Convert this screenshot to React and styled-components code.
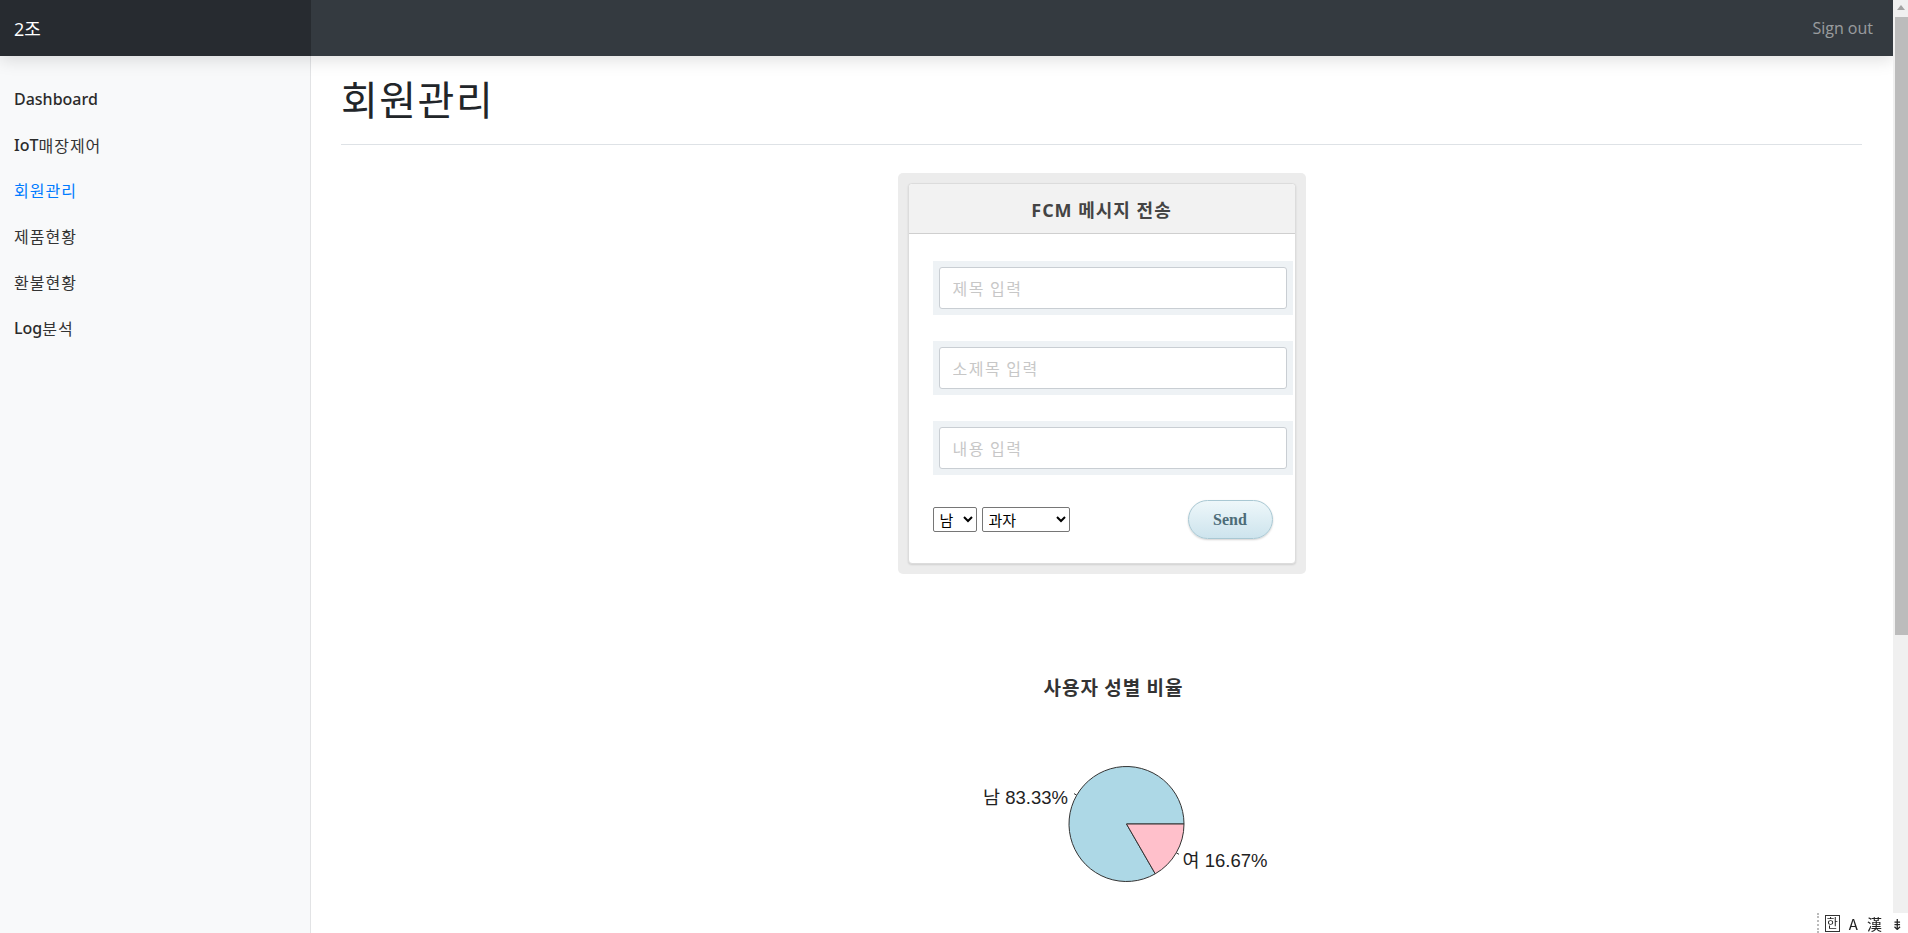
import React from 'react';
import styled, { createGlobalStyle } from 'styled-components';

const GlobalStyle = createGlobalStyle`
    html, body {
        margin: 0;
        padding: 0;
    }
    body {
        padding-right: 15px; // room for the window scrollbar drawn below
        font-family: "Open Sans", "Noto Sans CJK KR", sans-serif;
        color: #212529;
        background: #fff;
    }
    * {
        box-sizing: border-box;
    }
`;

const Navbar = styled.header`
    display: flex;
    align-items: center;
    height: 56px;
    background: #343a40;
    box-shadow: 0 4px 16px rgba(0, 0, 0, 0.13);
    position: relative;
    z-index: 2;
`;

const Brand = styled.div`
    display: flex;
    align-items: center;
    width: 311px;
    height: 100%;
    padding-left: 14px;
    background: rgba(0, 0, 0, 0.25);
    color: #fff;
    font-size: 18px;
`;

const SignOut = styled.a`
    margin-left: auto;
    padding-right: 20px;
    color: rgba(255, 255, 255, 0.5);
    font-size: 16px;
    text-decoration: none;
`;

const Body = styled.div`
    display: flex;
`;

const Sidebar = styled.nav`
    width: 311px;
    flex-shrink: 0;
    padding-top: 20px;
    background: #f8f9fa;
    border-right: 1px solid #e2e3e5;
    min-height: 1304px;
`;

const NavItem = styled.a`
    display: flex;
    align-items: center;
    height: 45.8px;
    padding-left: 14px;
    font-size: 16px;
    font-weight: 400;
    letter-spacing: 1px;
    color: ${props => (props.active ? '#007bff' : '#333')};
    text-decoration: none;
`;

const Latin = styled.span`
    font-family: "Noto Sans", sans-serif;
    font-weight: 500;
    letter-spacing: 0;
    color: ${props => (props.active ? '#007bff' : '#2b2b2b')};
`;

const Main = styled.main`
    flex: 1;
    padding: 0 31px 0 30px;
`;

const PageHeader = styled.div`
    padding: 20px 0;
    border-bottom: 1px solid #dee2e6;
`;

const Title = styled.h1`
    margin: 0;
    font-size: 40px;
    line-height: 48px;
    font-weight: 400;
    letter-spacing: 1.5px;
`;

const CardFrame = styled.div`
    width: 408px;
    margin: 28px auto 0;
    padding: 10px;
    background: #ececec;
    border-radius: 5px;
`;

const Card = styled.div`
    background: #fff;
    border: 1px solid #dcdcdc;
    border-radius: 4px;
    box-shadow: 0 1px 2px rgba(0, 0, 0, 0.12);
`;

const CardHeader = styled.div`
    display: flex;
    align-items: center;
    justify-content: center;
    height: 50px;
    background: #f2f2f2;
    border-bottom: 1px solid #cfcfcf;
    border-radius: 4px 4px 0 0;
    font-size: 18px;
    font-weight: 700;
    letter-spacing: 1px;
    color: #444;
`;

const CardBody = styled.div`
    display: flex;
    flex-direction: column;
    gap: 26px;
    padding: 27px 2px 24px 24px;
`;

const Field = styled.div`
    padding: 6px;
    background: #eef2f5;
`;

const Input = styled.input`
    display: block;
    width: 100%;
    height: 42px;
    padding: 0 13px;
    border: 1px solid #c9ced3;
    border-radius: 3px;
    font-family: "Noto Sans CJK KR", sans-serif;
    font-size: 16px;
    letter-spacing: 1.5px;
    color: #333;
    outline: none;

    &::placeholder {
        color: #c7c7c7;
    }
`;

const Controls = styled.div`
    display: flex;
    align-items: center;
    gap: 5px;
    margin-top: -1px;
    padding-right: 20px;
`;

const Select = styled.select`
    width: ${props => props.w}px;
    height: 25px;
    padding: 0 2px;
    border: 1px solid #767676;
    border-radius: 2px;
    background: #fff;
    font-family: "Noto Sans CJK KR", sans-serif;
    font-size: 15px;
    color: #000;
`;

const SendButton = styled.button`
    margin-left: auto;
    width: 85px;
    height: 39px;
    border: 1px solid #a9c8d3;
    border-radius: 20px;
    background: linear-gradient(#eef7fa, #cde4ed);
    box-shadow: 0 1px 2px rgba(0, 0, 0, 0.18);
    font-family: "Liberation Serif", serif;
    font-size: 16px;
    font-weight: 700;
    color: #4d6c78;
`;

const Chart = styled.svg`
    display: block;
    margin: 66px auto 240px;
`;

const ScrollTrack = styled.div`
    position: fixed;
    top: 0;
    right: 0;
    bottom: 0;
    width: 15px;
    background: #f0f0f0;
    z-index: 4;
`;

const ScrollArrow = styled.div`
    width: 0;
    height: 0;
    margin: 5px 0 0 4px;
    border-left: 4px solid transparent;
    border-right: 4px solid transparent;
    border-bottom: 5px solid #a3a3a3;
`;

const ScrollThumb = styled.div`
    width: 13px;
    height: 618px;
    margin: 7px 0 0 2px;
    background: #bcbcbc;
`;

const ImeBar = styled.div`
    position: fixed;
    right: 0;
    bottom: 0;
    display: flex;
    align-items: center;
    gap: 9px;
    height: 20px;
    padding: 0 4px 0 6px;
    background: #fff;
    border-left: 2px dotted #bbb;
    font-family: "Noto Sans CJK KR", sans-serif;
    font-size: 15px;
    color: #222;
    z-index: 5;
`;

const ImeBox = styled.span`
    display: inline-flex;
    align-items: center;
    justify-content: center;
    width: 15px;
    height: 17px;
    border: 1px solid #333;
    font-size: 12px;
    line-height: 1;
`;

const menu = [
    { latin: 'Dashboard', ko: '' },
    { latin: 'IoT', ko: '매장제어' },
    { latin: '', ko: '회원관리', active: true },
    { latin: '', ko: '제품현황' },
    { latin: '', ko: '환불현황' },
    { latin: 'Log', ko: '분석' },
];

const cx = 264.5;
const cy = 184;
const r = 57.5;
const ex = cx + r * Math.cos(Math.PI / 3);
const ey = cy + r * Math.sin(Math.PI / 3);

const App = () => {
    return (
        <>
            <GlobalStyle />
            <Navbar>
                <Brand>2조</Brand>
                <SignOut href="#">Sign out</SignOut>
            </Navbar>
            <Body>
                <Sidebar>
                    {menu.map(item => (
                        <NavItem key={item.latin + item.ko} href="#" active={item.active ? 1 : 0}>
                            {item.latin && <Latin active={item.active ? 1 : 0}>{item.latin}</Latin>}
                            {item.ko}
                        </NavItem>
                    ))}
                </Sidebar>
                <Main>
                    <PageHeader>
                        <Title>회원관리</Title>
                    </PageHeader>
                    <CardFrame>
                        <Card>
                            <CardHeader>FCM 메시지 전송</CardHeader>
                            <CardBody>
                                <Field><Input placeholder="제목 입력" /></Field>
                                <Field><Input placeholder="소제목 입력" /></Field>
                                <Field><Input placeholder="내용 입력" /></Field>
                                <Controls>
                                    <Select w={44} defaultValue="남">
                                        <option>남</option>
                                        <option>여</option>
                                    </Select>
                                    <Select w={88} defaultValue="과자">
                                        <option>과자</option>
                                        <option>음료</option>
                                    </Select>
                                    <SendButton>Send</SendButton>
                                </Controls>
                            </CardBody>
                        </Card>
                    </CardFrame>
                    <Chart width="480" height="480" viewBox="0 0 480 480">
                        <text x="251.5" y="46" textAnchor="middle" dominantBaseline="central" letterSpacing="1"
                            fontFamily="'Noto Sans CJK KR', sans-serif" fontWeight="700" fontSize="19" fill="#333">
                            사용자 성별 비율
                        </text>
                        <path d={`M${cx},${cy} L${ex},${ey} A${r},${r} 0 1 1 ${cx + r},${cy} Z`}
                            fill="#add8e6" stroke="#333" strokeWidth="1" />
                        <path d={`M${cx},${cy} L${cx + r},${cy} A${r},${r} 0 0 1 ${ex},${ey} Z`}
                            fill="#ffc0cb" stroke="#333" strokeWidth="1" />
                        <line x1="214.7" y1="155.2" x2="212" y2="153.6" stroke="#333" />
                        <line x1="314.3" y1="212.8" x2="317" y2="214.3" stroke="#333" />
                        <text x="206" y="157" textAnchor="end" dominantBaseline="central"
                            fontFamily="'Liberation Sans', 'Noto Sans CJK KR', sans-serif" fontSize="18.5" fill="#222">
                            남 83.33%
                        </text>
                        <text x="320.5" y="220" dominantBaseline="central"
                            fontFamily="'Liberation Sans', 'Noto Sans CJK KR', sans-serif" fontSize="18.5" fill="#222">
                            여 16.67%
                        </text>
                    </Chart>
                </Main>
            </Body>
            <ScrollTrack>
                <ScrollArrow />
                <ScrollThumb />
            </ScrollTrack>
            <ImeBar>
                <ImeBox>한</ImeBox>
                <span>A</span>
                <span>漢</span>
                <span>⇟</span>
            </ImeBar>
        </>
    );
};

export default App;
